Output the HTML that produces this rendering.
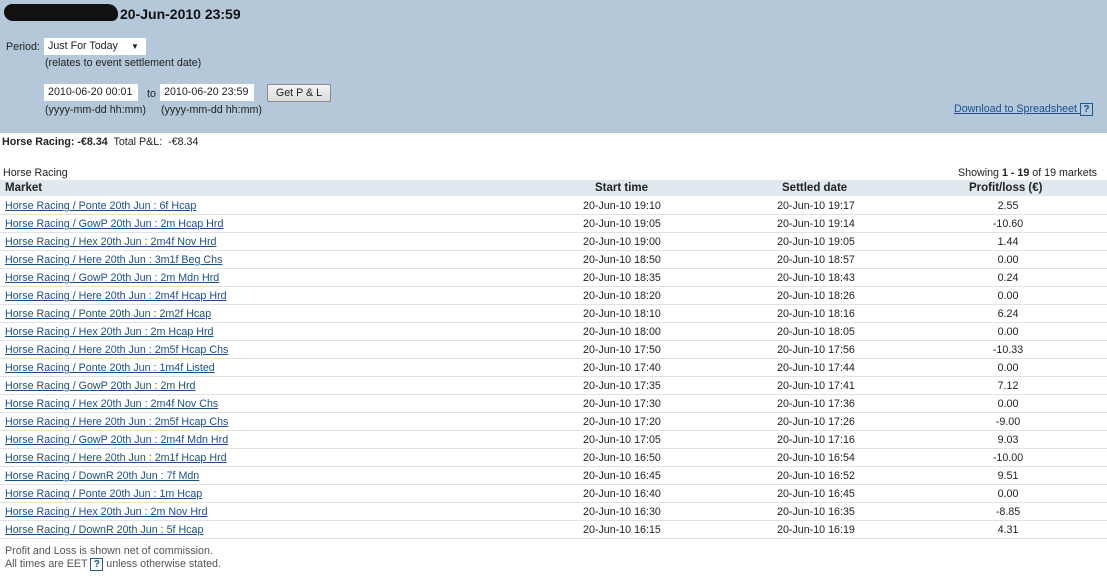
<!DOCTYPE html>
<html><head><style>
body{margin:0;width:1107px;height:577px;overflow:hidden;background:#fff;font-family:"Liberation Sans",sans-serif;font-size:10.7px;color:#222}
.top{position:absolute;left:0;top:0;width:1107px;height:133px;background:#b4c8d9}
.abs{position:absolute;white-space:nowrap}
.inp{position:absolute;background:#fff;height:17px;line-height:17px;padding-left:4px;font-size:10.7px}
.btn{position:absolute;background:linear-gradient(#f4f4f4,#dcdcdc);border:1px solid #8a8a8a;border-radius:2px;height:16px;line-height:16px;text-align:center;font-size:10.7px}
a{color:#1a4f8f;text-decoration:underline}
.q{display:inline-block;border:1px solid #1a5a9a;color:#1a4f8f;font-weight:bold;width:11px;height:11px;line-height:11px;text-align:center;font-size:10px;text-decoration:none}
</style></head><body>
<div class="top"></div>
<div class="abs" style="left:4px;top:4px;width:114px;height:17px;background:#111;border-radius:8px 10px 6px 9px"></div>
<div class="abs" style="left:120px;top:6px;font-size:14px;font-weight:bold;color:#111">20-Jun-2010 23:59</div>
<div class="abs" style="left:6px;top:41px">Period:</div>
<div class="inp" style="left:44px;top:38px;width:98px">Just For Today <span style="position:absolute;left:87px;top:0;font-size:8px">▼</span></div>
<div class="abs" style="left:45px;top:57px">(relates to event settlement date)</div>
<div class="inp" style="left:44px;top:84px;width:90px">2010-06-20 00:01</div>
<div class="abs" style="left:147px;top:88px">to</div>
<div class="inp" style="left:160px;top:84px;width:90px">2010-06-20 23:59</div>
<div class="btn" style="left:267px;top:84px;width:62px">Get P &amp; L</div>
<div class="abs" style="left:45px;top:104px">(yyyy-mm-dd hh:mm)</div>
<div class="abs" style="left:161px;top:104px">(yyyy-mm-dd hh:mm)</div>
<div class="abs" style="left:954px;top:103px"><a>Download to Spreadsheet </a> <span class="q">?</span></div>
<div class="abs" style="left:2px;top:136px"><b>Horse Racing: -€8.34</b>&nbsp; Total P&amp;L: &nbsp;-€8.34</div>
<div class="abs" style="left:3px;top:167px">Horse Racing</div>
<div class="abs" style="left:958px;top:167px">Showing <b>1 - 19</b> of 19 markets</div>
<div id="r"></div>
<script>
var d=[["Ponte 20th Jun : 6f Hcap","19:10","19:17","2.55"],["GowP 20th Jun : 2m Hcap Hrd","19:05","19:14","-10.60"],["Hex 20th Jun : 2m4f Nov Hrd","19:00","19:05","1.44"],["Here 20th Jun : 3m1f Beg Chs","18:50","18:57","0.00"],["GowP 20th Jun : 2m Mdn Hrd","18:35","18:43","0.24"],["Here 20th Jun : 2m4f Hcap Hrd","18:20","18:26","0.00"],["Ponte 20th Jun : 2m2f Hcap","18:10","18:16","6.24"],["Hex 20th Jun : 2m Hcap Hrd","18:00","18:05","0.00"],["Here 20th Jun : 2m5f Hcap Chs","17:50","17:56","-10.33"],["Ponte 20th Jun : 1m4f Listed","17:40","17:44","0.00"],["GowP 20th Jun : 2m Hrd","17:35","17:41","7.12"],["Hex 20th Jun : 2m4f Nov Chs","17:30","17:36","0.00"],["Here 20th Jun : 2m5f Hcap Chs","17:20","17:26","-9.00"],["GowP 20th Jun : 2m4f Mdn Hrd","17:05","17:16","9.03"],["Here 20th Jun : 2m1f Hcap Hrd","16:50","16:54","-10.00"],["DownR 20th Jun : 7f Mdn","16:45","16:52","9.51"],["Ponte 20th Jun : 1m Hcap","16:40","16:45","0.00"],["Hex 20th Jun : 2m Nov Hrd","16:30","16:35","-8.85"],["DownR 20th Jun : 5f Hcap","16:15","16:19","4.31"]];
var h='';d.forEach(function(r,i){var y=197+i*18;
h+='<div class="abs" style="left:0;top:'+(y+17)+'px;width:1107px;height:1px;background:#e2e2e2"></div>';
h+='<div class="abs" style="left:5px;top:'+(y+3)+'px"><a>Horse Racing / '+r[0]+'</a></div>';
h+='<div class="abs" style="left:583px;top:'+(y+3)+'px">20-Jun-10 '+r[1]+'</div>';
h+='<div class="abs" style="left:777px;top:'+(y+3)+'px">20-Jun-10 '+r[2]+'</div>';
h+='<div class="abs" style="left:958px;width:100px;text-align:center;top:'+(y+3)+'px">'+r[3]+'</div>';});
document.getElementById('r').innerHTML=h;
</script>
<div class="abs" style="left:0;top:180px;width:1107px;height:16px;background:#dfe9ee"></div>
<div class="abs" style="left:5px;top:182px;font-weight:bold;font-size:11.5px">Market</div>
<div class="abs" style="left:595px;top:182px;font-weight:bold;font-size:11.5px">Start time</div>
<div class="abs" style="left:782px;top:182px;font-weight:bold;font-size:11.5px">Settled date</div>
<div class="abs" style="left:969px;top:182px;font-weight:bold;font-size:11.5px">Profit/loss (€)</div>
<div class="abs" style="left:5px;top:545px;color:#555">Profit and Loss is shown net of commission.</div>
<div class="abs" style="left:5px;top:558px;color:#555">All times are EET <span class="q">?</span> unless otherwise stated.</div>
</body></html>
